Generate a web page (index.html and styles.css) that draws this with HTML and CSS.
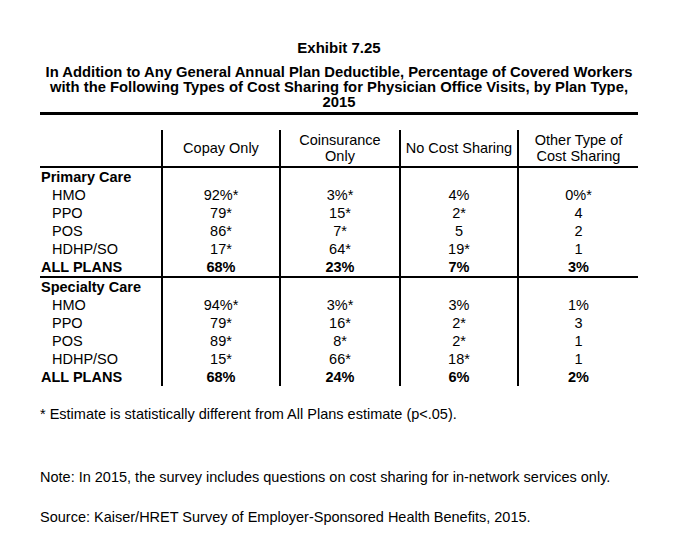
FILE: index.html
```html
<!DOCTYPE html>
<html>
<head>
<meta charset="utf-8">
<link rel="stylesheet" href="styles.css">
</head>
<body>
<div class="page">
  <div class="exhibit">Exhibit 7.25</div>
  <div class="title">In Addition to Any General Annual Plan Deductible, Percentage of Covered Workers with the Following Types of Cost Sharing for Physician Office Visits, by Plan Type, 2015</div>
  <div class="rule"></div>
  <table class="data">
    <colgroup>
      <col class="c0"><col class="c1"><col class="c2"><col class="c3"><col class="c4">
    </colgroup>
    <thead>
      <tr>
        <th class="lab"></th>
        <th>Copay Only</th>
        <th>Coinsurance<br>Only</th>
        <th>No Cost Sharing</th>
        <th>Other Type of<br>Cost Sharing</th>
      </tr>
    </thead>
    <tbody>
      <tr><td class="lab sec">Primary Care</td><td></td><td></td><td></td><td></td></tr>
      <tr><td class="lab ind">HMO</td><td>92%*</td><td>3%*</td><td>4%</td><td>0%*</td></tr>
      <tr><td class="lab ind">PPO</td><td>79*</td><td>15*</td><td>2*</td><td>4</td></tr>
      <tr><td class="lab ind">POS</td><td>86*</td><td>7*</td><td>5</td><td>2</td></tr>
      <tr><td class="lab ind">HDHP/SO</td><td>17*</td><td>64*</td><td>19*</td><td>1</td></tr>
      <tr class="all sep"><td class="lab">ALL PLANS</td><td>68%</td><td>23%</td><td>7%</td><td>3%</td></tr>
      <tr><td class="lab sec">Specialty Care</td><td></td><td></td><td></td><td></td></tr>
      <tr><td class="lab ind">HMO</td><td>94%*</td><td>3%*</td><td>3%</td><td>1%</td></tr>
      <tr><td class="lab ind">PPO</td><td>79*</td><td>16*</td><td>2*</td><td>3</td></tr>
      <tr><td class="lab ind">POS</td><td>89*</td><td>8*</td><td>2*</td><td>1</td></tr>
      <tr><td class="lab ind">HDHP/SO</td><td>15*</td><td>66*</td><td>18*</td><td>1</td></tr>
      <tr class="all last"><td class="lab">ALL PLANS</td><td>68%</td><td>24%</td><td>6%</td><td>2%</td></tr>
    </tbody>
  </table>
  <p class="foot star">* Estimate is statistically different from All Plans estimate (p&lt;.05).</p>
  <p class="foot note">Note: In 2015, the survey includes questions on cost sharing for in-network services only.</p>
  <p class="foot src">Source: Kaiser/HRET Survey of Employer-Sponsored Health Benefits, 2015.</p>
</div>
</body>
</html>
```
FILE: styles.css
```css
html, body {
  margin: 0;
  padding: 0;
  background: #fff;
}
body {
  font-family: "Liberation Sans", Arial, sans-serif;
  color: #000;
  font-size: 14.5px;
}
.page {
  width: 598px;
  margin-left: 40px;
  padding-top: 39px;
}
.exhibit {
  text-align: center;
  font-weight: bold;
  font-size: 15px;
  line-height: 18px;
}
.title {
  margin-top: 8px;
  text-align: center;
  font-weight: bold;
  font-size: 14.8px;
  line-height: 15px;
  padding: 0 4px;
}
.rule {
  margin-top: 2px;
  height: 3px;
  background: #000;
}
.data {
  margin-top: 15px;
  width: 598px;
  border-collapse: collapse;
  table-layout: fixed;
}
.c0 { width: 122px; }
.c1 { width: 118px; }
.c2 { width: 120px; }
.c3 { width: 118px; }
.c4 { width: 120px; }
.data th {
  font-weight: normal;
  text-align: center;
  line-height: 16px;
  height: 36px;
  padding: 0;
  vertical-align: middle;
  border-left: 2px solid #000;
  border-bottom: 2px solid #000;
}
.data th.lab {
  border-left: none;
}
.data td {
  text-align: center;
  height: 18px;
  line-height: 18px;
  padding: 0;
  border-left: 2px solid #000;
  white-space: nowrap;
}
.data td.lab {
  text-align: left;
  border-left: none;
  padding-left: 1px;
}
.data td.sec {
  font-weight: bold;
}
.data td.ind {
  padding-left: 12px;
}
.data tr.all td {
  font-weight: bold;
}
.data tr.sep td {
  border-bottom: 2px solid #000;
}
.foot {
  margin: 0;
  line-height: 18px;
}
.star {
  margin-top: 19px;
}
.note {
  margin-top: 45px;
}
.src {
  margin-top: 22px;
}
```
